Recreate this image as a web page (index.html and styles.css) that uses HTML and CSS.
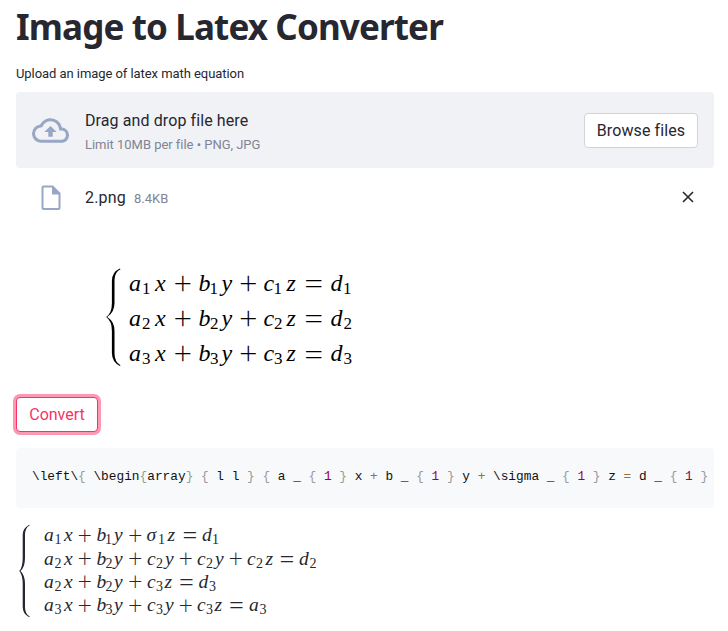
FILE: index.html
```html
<!DOCTYPE html>
<html lang="en">
<head>
<meta charset="utf-8">
<title>Image to Latex Converter</title>
<link rel="stylesheet" href="styles.css">
</head>
<body>
<main class="app">
  <h1 class="title"><span>Image to Latex Converter</span></h1>
  <p class="label"><span>Upload an image of latex math equation</span></p>
  <section class="dropzone">
    <svg class="cloud" viewBox="0 0 24 24"><path d="M19.35 10.04A7.49 7.49 0 0 0 12 4C9.11 4 6.6 5.64 5.35 8.04A5.994 5.994 0 0 0 0 14c0 3.31 2.69 6 6 6h13c2.76 0 5-2.24 5-5 0-2.64-2.05-4.78-4.65-4.96zM19 18H6c-2.21 0-4-1.79-4-4 0-2.05 1.53-3.76 3.56-3.97l1.07-.11.5-.95A5.469 5.469 0 0 1 12 6c2.62 0 4.88 1.86 5.39 4.43l.3 1.5 1.53.11A2.98 2.98 0 0 1 22 15c0 1.65-1.35 3-3 3zM8 13h2.55v3h2.9v-3H16l-4-4z"/></svg>
    <div class="hint">
      <div class="drag"><span>Drag and drop file here</span></div>
      <div class="limit"><span>Limit 10MB per file • PNG, JPG</span></div>
    </div>
    <button class="button browse"><span>Browse files</span></button>
  </section>
  <section class="file">
    <svg class="doc" viewBox="0 0 20 26"><path fill-rule="evenodd" d="M2.5.5H12L19.500 8v15q0 2-2 2h-15q-2 0-2-2V2.500q0-2 2-2zM2.500 2.500v20.500h15V9.500H11v-7z"/></svg>
    <span class="name">2.png</span>
    <span class="size">8.4KB</span>
    <svg class="close" viewBox="0 0 12 12"><path d="M1 1l10 10M11 1L1 11"/></svg>
  </section>
  <svg class="source math" viewBox="90 255 280 125">
    <path class="brace" d="M120.500 269.200Q114.500 272 114.500 280V303Q114.500 312.500 107.200 317Q114.500 321.500 114.500 331V353Q114.500 362 120.500 365.200L119.900 365.900Q111.900 362 111.900 353V331Q111.900 321 106.200 317Q111.900 313 111.900 303V281Q111.900 272 119.900 268.500Z"/>
    <text class="v" y="291" x="129 155 198.500 221.500 263.500 286.500 330.500">axbyczd</text>
    <text class="s" y="294" x="142 209.500 273.500 343">1111</text>
    <text class="o" y="293.500" x="173.500 239">++</text>
    <text class="e" y="296" x="303">=</text>
    <text class="v" y="326.200" x="129 155 198.500 221.500 263.500 286.500 330.500">axbyczd</text>
    <text class="s" y="329.200" x="142 210 274 343.500">2222</text>
    <text class="o" y="328.700" x="173.500 239">++</text>
    <text class="e" y="331.200" x="303">=</text>
    <text class="v" y="361.200" x="129 155 198.500 221.500 263.500 286.500 330.500">axbyczd</text>
    <text class="s" y="364.200" x="142 210 274 343.500">3333</text>
    <text class="o" y="364" x="173.500 239">++</text>
    <text class="e" y="366.500" x="303">=</text>
  </svg>
  <button class="button convert"><span>Convert</span></button>
  <pre class="code"><code>\left\<i>{</i> \begin<i>{</i>array<i>}</i> <i>{</i> l l <i>}</i> <i>{</i> a _ <i>{</i> <b>1</b> <i>}</i> x <em>+</em> b _ <i>{</i> <b>1</b> <i>}</i> y <em>+</em> \sigma _ <i>{</i> <b>1</b> <i>}</i> z <em>=</em> d _ <i>{</i> <b>1</b> <i>}</i></code></pre>
  <svg class="result math" viewBox="16 515 324 116">
    <path class="brace" d="M29.800 525.300Q25 528 25 535V558Q25 567 20.500 571Q25 575 25 584V607Q25 614 29.800 616.600L29.200 617.200Q22.700 614 22.700 607V584Q22.700 575 19.300 571Q22.700 567 22.700 558V535Q22.700 528 29.200 524.700Z"/>
    <text class="v" y="541" x="44 64 96.500 114 146.500 167.500 202">axbyσzd</text>
    <text class="s" y="544" x="54.500 105 158 212">1111</text>
    <text class="o" y="543.500" x="77.500 128">++</text>
    <text class="e" y="545.200" x="181.500">=</text>
    <text class="v" y="565" x="44 64 96.500 114 147 165 197 215 247 265.500 299">axbycycyczd</text>
    <text class="s" y="568" x="54.500 105.500 156 206 256 309.500">222222</text>
    <text class="o" y="567.200" x="77.500 128 178.500 228.500">++++</text>
    <text class="e" y="568.900" x="278.500">=</text>
    <text class="v" y="588" x="44 64 96.500 114 147 164.500 198.500">axbyczd</text>
    <text class="s" y="591" x="54.500 105.500 156 209">2233</text>
    <text class="o" y="590.200" x="77.500 128">++</text>
    <text class="e" y="591.900" x="178">=</text>
    <text class="v" y="611.300" x="44 64 96.500 114 147 165 197 214.500 249">axbycycza</text>
    <text class="s" y="614.300" x="54.500 105.500 156 206 259.500">33333</text>
    <text class="o" y="613.500" x="77.500 128 178.500">+++</text>
    <text class="e" y="615.200" x="228">=</text>
  </svg>
</main>
</body>
</html>
```
FILE: styles.css
```css
* { box-sizing: border-box; }
body {
  margin: 0;
  background: #fff;
  color: #262730;
  font: 16px/24px Roboto, sans-serif;
  overflow: hidden;
}
.app {
  display: flex;
  flex-direction: column;
  align-items: flex-start;
  padding: 0 14px 0 16px;
}
.title {
  margin: 5px 0 0;
  font: 700 35px/44px "Noto Sans", sans-serif;
  letter-spacing: -0.86px;
  white-space: nowrap;
}
.label {
  margin: 15px 0 0;
  font-size: 13px;
  line-height: 20px;
  letter-spacing: -0.06px;
}
.dropzone {
  display: flex;
  align-items: center;
  align-self: stretch;
  height: 76px;
  margin-top: 8px;
  padding: 0 16px;
  border-radius: 4px;
  background: #f0f2f6;
}
.cloud { width: 37px; height: 37px; fill: #98a7c5; }
.hint { margin-left: 16px; flex: 1; }
.drag { line-height: 24px; margin-top: 3px; letter-spacing: 0.1px; }
.limit { font-size: 13px; line-height: 20px; color: #808495; margin-top: 2px; letter-spacing: -0.03px; }
.button {
  height: 35px;
  padding: 0;
  border: 1px solid #d2d3d8;
  border-radius: 4px;
  background: #fff;
  color: #262730;
  font: 16px/24px Roboto, sans-serif;
}
.browse { width: 114px; padding-top: 1px; letter-spacing: 0.1px; }
.file {
  display: flex;
  align-items: center;
  align-self: stretch;
  height: 26px;
  margin-top: 17px;
  padding: 0 20px 0 25px;
}
.doc { width: 20px; height: 26px; fill: #98a7c5; }
.name { margin-left: 24px; letter-spacing: 0.2px; }
.size { margin-left: 8px; font-size: 13px; color: #808495; padding-top: 2px; }
.close {
  width: 12px;
  height: 12px;
  margin: 0 0 2px auto;
  stroke: #262730;
  stroke-width: 1.6;
  fill: none;
}
.math { display: block; fill: #262730; }
.math text { font-family: "Liberation Serif", serif; }
.math .v { font-style: italic; font-size: 19.500px; }
.math .s { font-size: 14px; }
.math .o, .math .e { font-family: Lato, sans-serif; font-weight: 300; }
.math .o { font-size: 25px; }
.math .e { font-size: 29px; }
.source { width: 280px; height: 125px; margin: 44px 0 0 74px; fill: #000; }
.source .v { font-size: 24px; }
.source .s { font-size: 17px; }
.source .o { font-size: 32px; }
.source .e { font-size: 37px; }
.convert {
  width: 82px;
  margin-top: 17px;
  border-color: #f63366;
  color: #f63366;
  box-shadow: 0 0 0 3px #fb99b2;
}
.code {
  align-self: stretch;
  height: 60px;
  margin: 16px 0 0;
  padding: 17px 0 0 16px;
  border-radius: 4px;
  background: #f7f9fb;
  color: #111;
  font: 12.800px/24px "Liberation Mono", monospace;
  white-space: pre;
  overflow: hidden;
}
.code code { font: inherit; }
.code i { font-style: normal; color: #999; }
.code b { font-weight: normal; color: #905; }
.code em { font-style: normal; color: #9a6e3a; }
.result { width: 324px; height: 116px; margin-top: 7px; }
```
